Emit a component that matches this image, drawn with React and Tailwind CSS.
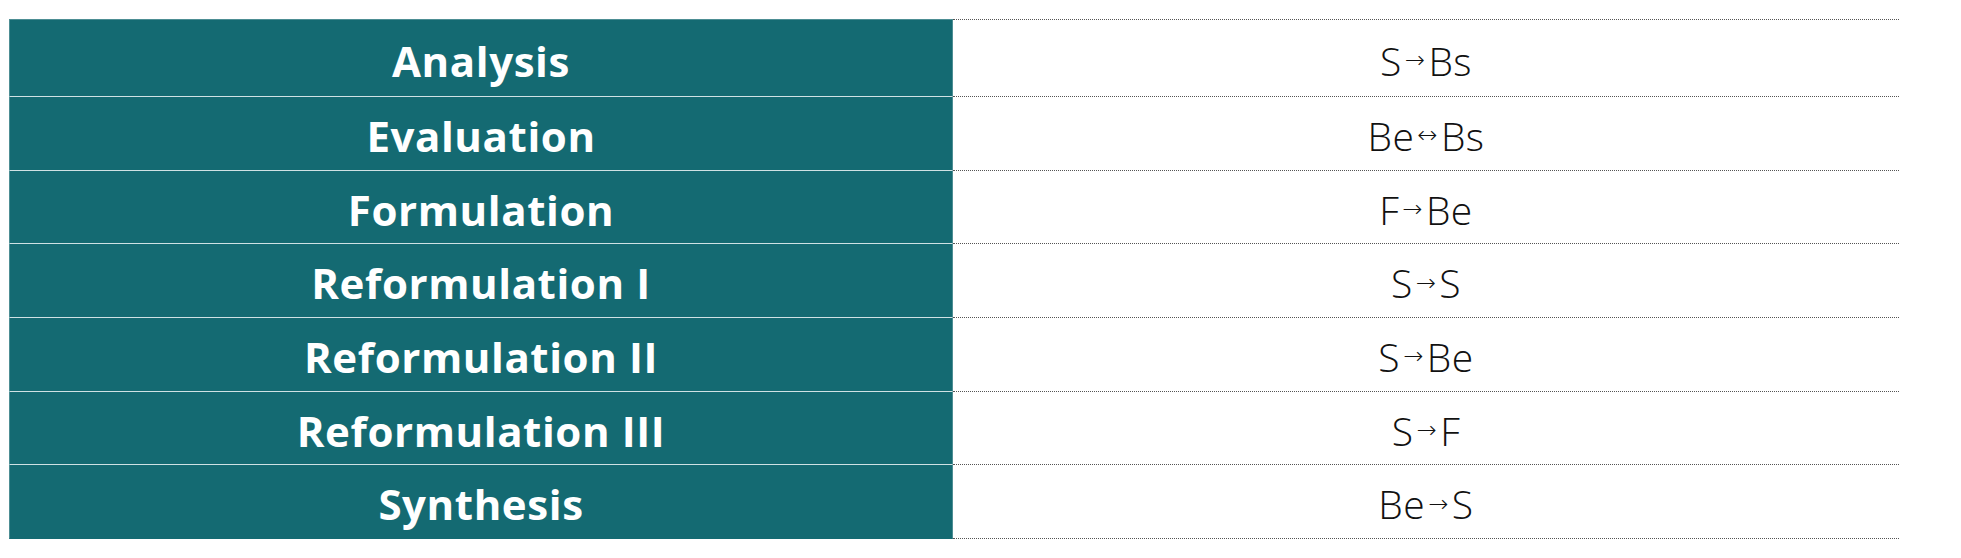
import React from "react";

const rows = [
  { name: "Analysis", rule: ["S", "→", "Bs"] },
  { name: "Evaluation", rule: ["Be", "↔", "Bs"] },
  { name: "Formulation", rule: ["F", "→", "Be"] },
  { name: "Reformulation I", rule: ["S", "→", "S"] },
  { name: "Reformulation II", rule: ["S", "→", "Be"] },
  { name: "Reformulation III", rule: ["S", "→", "F"] },
  { name: "Synthesis", rule: ["Be", "→", "S"] },
];

export default function App() {
  return (
    <div className="w-[1961px] h-[558px] bg-white pt-[19px] pl-[9px]">
      <div className="w-[1890px] flex flex-col">
        {rows.map((r, i) => (
          <div key={r.name} className={"flex " + (i === 0 ? "h-[78px]" : "h-[73.7px]")}>
            <div
              className={
                "w-[944px] bg-[#146a72] flex items-center justify-center border-l border-l-[#4d8e94] border-r border-r-[#4d8e94] " +
                (i === 0 ? "border-t border-t-[#4d8e94] " : "") +
                (i === rows.length - 1 ? "border-b border-b-[#146a72]" : "border-b border-b-[#cfe2e4]")
              }
            >
              <span className="text-white font-bold text-[42px] leading-none tracking-[0.6px] pt-[5px]" style={{ fontFamily: '"Open Sans", sans-serif' }}>
                {r.name}
              </span>
            </div>
            <div
              className={
                "flex-1 flex items-center justify-center border-b border-dotted border-b-[#555] " +
                (i === 0 ? "border-t border-t-[#555] border-dotted" : "")
              }
            >
              <span className="text-[#111] font-light text-[39px] leading-none flex items-center pt-[4px] tracking-[0.5px]" style={{ fontFamily: '"Open Sans", sans-serif' }}>
                <span>{r.rule[0]}</span>
                <span className="text-[24px] mx-[3px]" style={{ fontFamily: '"DejaVu Sans", sans-serif' }}>{r.rule[1]}</span>
                <span>{r.rule[2]}</span>
              </span>
            </div>
          </div>
        ))}
      </div>
    </div>
  );
}
